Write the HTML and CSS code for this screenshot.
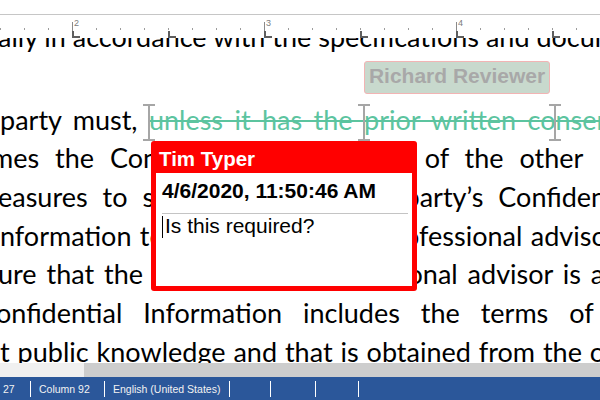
FILE: index.html
```html
<!DOCTYPE html>
<html lang="en">
<head>
    <meta charset="UTF-8">
    <meta name="viewport" content="width=device-width, initial-scale=1.0">
    <title>Review - Tim Typer</title>
    <link rel="stylesheet" href="styles.css">
</head>
<body>

    <div class="screen">
        <div class="topbar"></div>

        <!-- ruler: one cell per 1/8 inch -->
        <div class="ruler">
            <span class="cell"></span>
            <span class="cell"></span>
            <span class="cell"></span>
            <span class="cell num tab"><span class="lbl">2</span></span>
            <span class="cell"></span>
            <span class="cell"></span>
            <span class="cell"></span>
            <span class="cell tab"></span>
            <span class="cell"></span>
            <span class="cell"></span>
            <span class="cell"></span>
            <span class="cell num tab"><span class="lbl">3</span></span>
            <span class="cell"></span>
            <span class="cell"></span>
            <span class="cell"></span>
            <span class="cell tab"></span>
            <span class="cell"></span>
            <span class="cell"></span>
            <span class="cell"></span>
            <span class="cell num tab"><span class="lbl">4</span></span>
            <span class="cell"></span>
            <span class="cell"></span>
            <span class="cell"></span>
            <span class="cell tab"></span>
            <span class="cell"></span>
        </div>

        <div class="doc">
            <p class="para first">
                <span class="ln l1">ally in accordance with the specifications and documentation</span>
            </p>
            <p class="para">
                <span class="ln l3">party must, <span class="ib"></span><del class="del">unless it has the <span class="ib"></span>prior written co<span class="ib"></span>nsent</del></span>
                <span class="ln l4">mes the Confidential Information of the other party</span>
                <span class="ln l5">easures to safeguard the other party’s Confidential</span>
                <span class="ln l6">nformation to the other party’s professional advisor</span>
                <span class="ln l7">ure that the other party’s professional advisor is aware</span>
                <span class="ln l8">onfidential Information includes the terms of</span>
                <span class="ln l9">t public knowledge and that is obtained from the other</span>
            </p>
        </div>

        <div class="hscroll">
            <div class="track"></div>
            <div class="thumb"></div>
        </div>

        <div class="status">
            <span class="item first-item">27</span>
            <span class="item w-col">Column 92</span>
            <span class="item w-lang">English (United States)</span>
            <span class="item w-a"></span>
            <span class="item w-b"></span>
            <span class="item w-c"></span>
        </div>

        <!-- faded marker of the other reviewer -->
        <div class="ghost">Richard Reviewer</div>

        <!-- comment popup -->
        <div class="popup">
            <div class="popup-head">Tim Typer</div>
            <div class="popup-body">
                <div class="stamp">4/6/2020, 11:50:46 AM</div>
                <div class="rule"></div>
                <div class="note"><span class="cursor"></span>Is this required?</div>
            </div>
        </div>
    </div>

</body>
</html>
```
FILE: styles.css
```css
* {
    box-sizing: border-box;
}

body {
    margin: 0;
    background-color: #fff;
    font-family: Lato, "Liberation Sans", sans-serif;
}

.screen {
    position: relative;
    width: 600px;
    height: 400px;
    overflow: hidden;
}

.topbar {
    height: 15px;
    border-bottom: 1px solid #c6c6c6;
}

/* ruler */
.ruler {
    display: flex;
    height: 23px;
    background-color: #fff;
}

.cell {
    position: relative;
    flex: 0 0 24px;
}

.cell::before {
    content: "";
    position: absolute;
    left: 0;
    top: 13px;
    width: 1px;
    height: 2px;
    background-color: #9c9c9c;
}

.cell.num::before {
    top: 7px;
    height: 14px;
    background-color: #8a8a8a;
}

.cell.tab::after {
    content: "";
    position: absolute;
    left: 0;
    top: 16px;
    width: 6px;
    height: 5px;
    border-left: 2px solid #5e5e5e;
    border-bottom: 2px solid #5e5e5e;
}

.lbl {
    position: absolute;
    left: 2px;
    top: 3px;
    font: 9px/10px "Liberation Sans", sans-serif;
    color: #7c7c7c;
}

/* document text */
.doc {
    height: 325px;
    overflow: hidden;
    font-size: 27px;
    line-height: 38.67px;
    color: #000;
}

.para {
    margin: 0;
}

.para.first {
    margin-top: -20px;
    margin-bottom: 44px;
}

.ln {
    display: block;
    white-space: nowrap;
}

.l1 { text-indent: -2px; }
.l3 { word-spacing: 4.5px; }
.l4 { text-indent: -9px; word-spacing: 9px; }
.l5 { text-indent: -2px; word-spacing: 8px; }
.l6 { word-spacing: 1.5px; }
.l7 { text-indent: -2px; word-spacing: 3px; }
.l8 { text-indent: -4px; word-spacing: 14px; }
.l9 { word-spacing: 1px; }

.del {
    color: #5cc49f;
    text-decoration: line-through;
    text-decoration-color: #5cc49f;
    text-decoration-thickness: 2px;
}

/* change bracket */
.ib {
    display: inline-block;
    position: relative;
    width: 0;
    height: 0;
}

.ib::before {
    content: "";
    position: absolute;
    left: -6px;
    top: -26px;
    width: 12px;
    height: 33px;
    border-top: 2px solid #a6a6a6;
    border-bottom: 2px solid #a6a6a6;
    background: linear-gradient(#a6a6a6, #a6a6a6) center / 2px 100% no-repeat;
}

/* scrollbar */
.hscroll {
    display: flex;
    height: 14px;
}

.track {
    width: 84px;
    background-color: #f0f0f0;
}

.thumb {
    flex: 1;
    background-color: #cdcdcd;
}

/* status bar */
.status {
    display: flex;
    align-items: center;
    height: 23px;
    background-color: #2b579a;
    color: #f2f2f2;
    font: 10.5px/16px "Liberation Sans", sans-serif;
}

.item {
    height: 16px;
    padding-left: 8px;
    border-right: 1px solid #fff;
    white-space: nowrap;
}

.first-item {
    width: 31px;
    padding-left: 3px;
}

.w-col { width: 74px; }
.w-lang { width: 125px; }
.w-a { width: 41px; }
.w-b { width: 45px; }
.w-c { width: 43px; }

/* other reviewer label */
.ghost {
    position: absolute;
    left: 364px;
    top: 61px;
    width: 186px;
    height: 33px;
    background-color: #c8d9cd;
    border: 1px solid #f2b4b4;
    border-radius: 3px;
    color: #a8a8a8;
    font: bold 21px/28px "Liberation Sans", sans-serif;
    text-align: center;
}

/* comment popup */
.popup {
    position: absolute;
    left: 151px;
    top: 141px;
    width: 266px;
    height: 150px;
    display: flex;
    flex-direction: column;
    padding: 0 5px 5px;
    background-color: #ff0000;
    border-radius: 3px;
    font-family: "Liberation Sans", Arial, sans-serif;
    z-index: 2;
}

.popup-head {
    height: 32px;
    padding: 3px 0 0 3px;
    color: #fff;
    font-size: 20.5px;
    font-weight: bold;
    line-height: 29px;
}

.popup-body {
    flex: 1;
    padding: 5px 4px 0 6px;
    background-color: #fff;
}

.stamp {
    font-size: 21px;
    font-weight: bold;
    line-height: 26px;
}

.rule {
    height: 1px;
    margin-top: 9px;
    background-color: #c4c4c4;
}

.note {
    font-size: 21px;
    line-height: 24px;
}

.cursor {
    display: inline-block;
    width: 1px;
    height: 22px;
    margin-right: 2px;
    vertical-align: -5px;
    background-color: #000;
}
```
